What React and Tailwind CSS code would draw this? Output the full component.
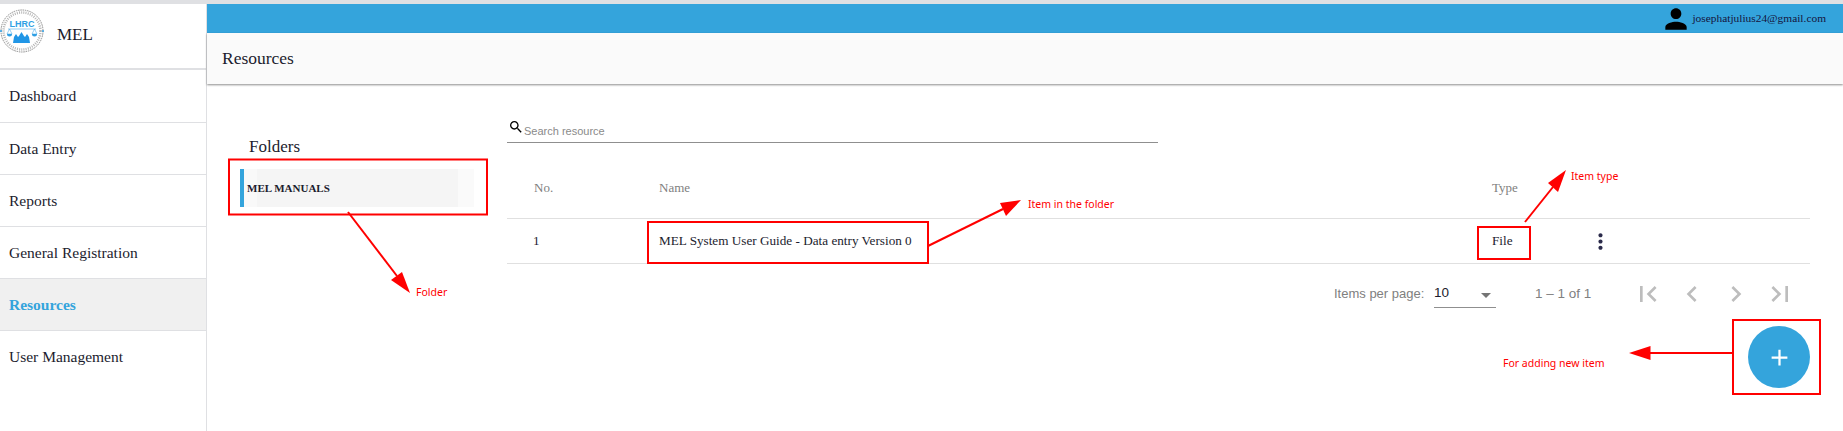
import React from 'react';

const serif = '[font-family:"Liberation_Serif",serif]';

const navItems = ['Dashboard', 'Data Entry', 'Reports', 'General Registration', 'Resources', 'User Management'];

const MatIcon = ({ d, size = 24, className = '' }) => (
  <svg width={size} height={size} viewBox="0 0 24 24" fill="currentColor" className={`shrink-0 ${className}`}>
    <path d={d} />
  </svg>
);

const Logo = () => (
  <svg width="44" height="46" viewBox="0 0 44 46" className="mb-[10px] shrink-0">
    <circle cx="22" cy="23" r="21" fill="none" stroke="#8c8c8c" strokeWidth="1" strokeDasharray="1.500 0.800" />
    <circle cx="22" cy="23" r="18.500" fill="none" stroke="#b5b5b5" strokeWidth="2.500" strokeDasharray="1 1.200" />
    <circle cx="1" cy="23" r="1" fill="#2f9fe4" />
    <circle cx="43" cy="23" r="1" fill="#2f9fe4" />
    <text x="22" y="19" textAnchor="middle" fontSize="9" fontWeight="700" fill="#2f9fe4" fontFamily="Liberation Sans, sans-serif">LHRC</text>
    <path d="M8 21h28" stroke="#2f9fe4" strokeWidth="0.500" />
    <path d="M9.500 21l-2.500 5h5zM34.500 21l-2.500 5h5z" fill="none" stroke="#2f9fe4" strokeWidth="0.500" />
    <path d="M7 26a2.500 2.500 0 0 0 5 0zM32 26a2.500 2.500 0 0 0 5 0z" fill="#2f9fe4" />
    <path d="M13 35l1-6 2-3 2 3 1-1 2.500-4 2.500 4 1 1 2-3 2 3 1 6z" fill="#2196e6" />
  </svg>
);

const labelClass = "absolute text-[10.5px] leading-4 text-[#ff0000] [font-family:'Noto_Sans',sans-serif]";

const Annotations = () => (
  <div className="absolute inset-0 pointer-events-none">
    <svg width="1843" height="431" className="absolute inset-0">
      <g fill="none" stroke="#ff0000" strokeWidth="2">
        <rect x="229" y="159.500" width="258" height="55" />
        <rect x="648" y="222" width="280" height="41" />
        <rect x="1478" y="227" width="52" height="32" />
        <rect x="1733" y="320" width="87" height="74" />
        <path d="M348 212L397 276" />
        <path d="M928 246L1003 209" />
        <path d="M1525 222L1553 187" />
        <path d="M1733 353H1650" />
      </g>
      <g fill="#ff0000">
        <path d="M410 293L391 280L402 272z" />
        <path d="M1021 200L1000 203L1006 216z" />
        <path d="M1566 170L1548 183L1558 192z" />
        <path d="M1629 353L1650.500 346V360z" />
      </g>
    </svg>
    <span className={`${labelClass} left-[416px] top-[284px]`}>Folder</span>
    <span className={`${labelClass} left-[1028px] top-[196px]`}>Item in the folder</span>
    <span className={`${labelClass} left-[1571px] top-[168px]`}>Item type</span>
    <span className={`${labelClass} left-[1503px] top-[355px]`}>For adding new item</span>
  </div>
);

export default function App() {
  return (
    <div className={`relative h-[431px] w-full overflow-hidden bg-white ${serif} text-[#1c1c2e]`}>
      <div className="h-1 bg-[#dfe0e3]" />
      <div className="flex h-[427px]">
        {/* Sidebar */}
        <aside className="w-[207px] shrink-0 border-r border-[#dfe0e3]">
          <div className="flex h-[66px] items-center gap-[13px] border-b-2 border-[#dfe0e3]">
            <Logo />
            <span className="mb-[2px] text-[17px]">MEL</span>
          </div>
          <nav>
            {navItems.map((item) => (
              <div
                key={item}
                className={`flex h-[52px] items-center border-b border-[#dfe0e3] pl-[9px] text-[15.500px] first:h-[53px] first:pb-px last:border-b-0 ${
                  item === 'Resources' ? 'bg-[#f0f0f0] font-bold text-[#34a4dc]' : ''
                }`}
              >
                {item}
              </div>
            ))}
          </nav>
        </aside>

        <main className="flex min-w-0 flex-1 flex-col">
          <div className="flex h-[29px] items-center justify-end bg-[#34a4dc] pr-[17px]">
            <MatIcon
              size={32}
              className="text-black"
              d="M12 12c2.210 0 4-1.790 4-4s-1.790-4-4-4-4 1.790-4 4 1.790 4 4 4zm0 2c-2.670 0-8 1.340-8 4v2h16v-2c0-2.660-5.330-4-8-4z"
            />
            <span className="text-[11.400px] text-[#14143c]">josephatjulius24@gmail.com</span>
          </div>
          <div className="flex h-[51px] items-center bg-[#fafafa] pl-[15px] text-[17.500px] shadow-[0_1px_2px_rgba(0,0,0,0.45)]">
            Resources
          </div>

          <div className="flex flex-1 pl-[33px] pr-[33px]">
            {/* Folders */}
            <section className="w-[234px] shrink-0 pt-[51px]">
              <h2 className="pl-[9px] text-[17px] leading-6">Folders</h2>
              <div className="mt-[10px] flex h-[38px] items-center border-l-4 border-[#34a4dc] bg-[linear-gradient(90deg,#f9f9f9_13px,#f5f5f5_13px,#f5f5f5_214px,#fafafa_214px)] pl-[3px] text-[11px] font-bold">
                MEL MANUALS
              </div>
            </section>

            {/* Items */}
            <section className="flex-1 pl-[33px] pt-[35px]">
              <div className="flex h-[24px] w-[651px] items-start border-b border-[#8f8f8f] pl-px">
                <MatIcon
                  size={16}
                  className="text-black"
                  d="M15.500 14h-.790l-.280-.270C15.410 12.590 16 11.110 16 9.500 16 5.910 13.090 3 9.500 3S3 5.910 3 9.500 5.910 16 9.500 16c1.610 0 3.090-.590 4.230-1.570l.270.280v.790l5 4.990L20.490 19l-4.990-5zm-6 0C7.010 14 5 11.990 5 9.500S7.010 5 9.500 5 14 7.010 14 9.500 11.990 14 9.500 14z"
                />
                <span className="pt-[4px] text-[11px] leading-4 text-[#8a8a8a] [font-family:'Liberation_Sans',sans-serif]">Search resource</span>
              </div>

              <div className="mt-[34px] flex h-[42px] items-start border-b border-[#e0e0e0] pt-[3px] text-[13px] leading-4 text-[#808080]">
                <span className="w-[152px] pl-[27px]">No.</span>
                <span className="w-[833px]">Name</span>
                <span>Type</span>
              </div>
              <div className="flex h-[45px] items-center border-b border-[#e0e0e0] text-[13.200px]">
                <span className="w-[152px] pl-[26px]">1</span>
                <span className="w-[833px]">MEL System User Guide - Data entry Version 0</span>
                <span className="w-[96px]">File</span>
                <MatIcon
                  size={25}
                  className="text-[#2a2a4a]"
                  d="M12 8c1.100 0 2-.900 2-2s-.900-2-2-2-2 .900-2 2 .900 2 2 2zm0 2c-1.100 0-2 .900-2 2s.900 2 2 2 2-.900 2-2-.900-2-2-2zm0 6c-1.100 0-2 .900-2 2s.900 2 2 2 2-.900 2-2-.900-2-2-2z"
                />
              </div>

              {/* Pagination */}
              <div className="flex h-[60px] items-center whitespace-nowrap pl-[827px] text-[13.500px] text-[#808080] [font-family:'Liberation_Sans',sans-serif]">
                <span className="w-[100px] text-[13px]">Items per page:</span>
                <div className="flex h-[28px] w-[62px] items-start justify-between border-b border-[#8f8f8f] text-[#1c1c2e]">
                  <span className="pt-[3px] leading-5">10</span>
                  <span className="mr-[5px] mt-[13px] h-0 w-0 border-x-[5px] border-t-[5px] border-x-transparent border-t-[#757575]" />
                </div>
                <span className="ml-[39px] w-[97px]">1 – 1 of 1</span>
                <div className="flex gap-[12px] text-[#bdbdbd]">
                  <MatIcon size={32} d="M18.410 16.590L13.820 12l4.590-4.590L17 6l-6 6 6 6zM6 6h2v12H6z" />
                  <MatIcon size={32} d="M15.410 7.410L14 6l-6 6 6 6 1.410-1.410L10.830 12z" />
                  <MatIcon size={32} d="M8.590 16.590L10 18l6-6-6-6-1.410 1.410L13.170 12z" />
                  <MatIcon size={32} d="M5.590 7.410L10.180 12l-4.590 4.590L7 18l6-6-6-6zM16 6h2v12h-2z" />
                </div>
              </div>

              <div className="mt-[2px] flex justify-end">
                <button className="flex h-[62px] w-[62px] items-center justify-center rounded-full bg-[#34a4dc] text-white">
                  <MatIcon size={27} d="M19 13h-6v6h-2v-6H5v-2h6V5h2v6h6v2z" />
                </button>
              </div>
            </section>
          </div>
        </main>
      </div>
      <Annotations />
    </div>
  );
}
